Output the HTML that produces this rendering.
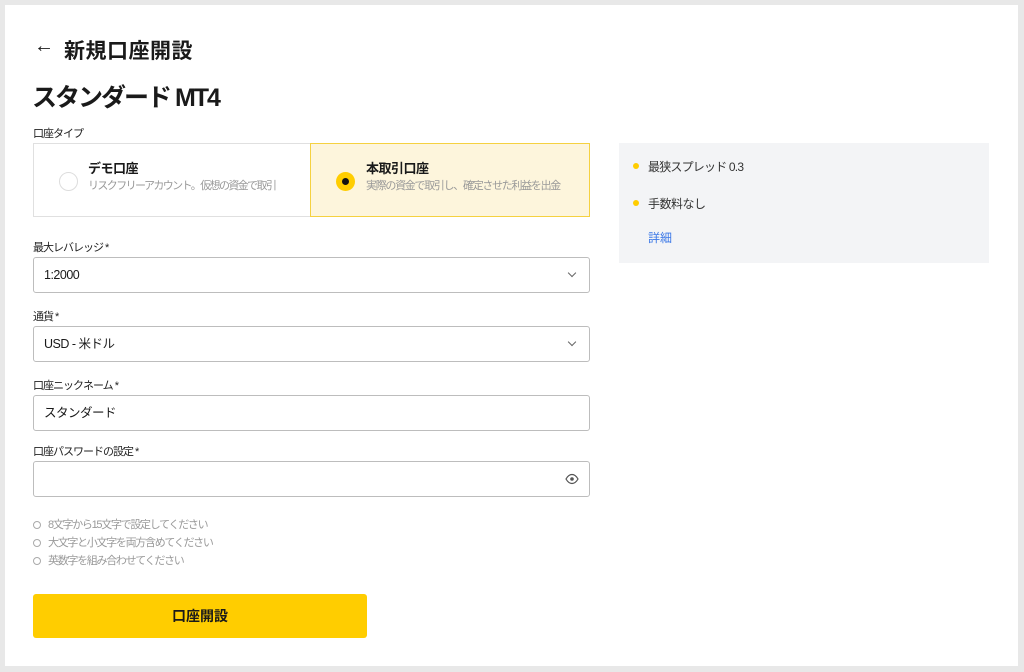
<!DOCTYPE html>
<html><head><meta charset="utf-8"><style>
*{box-sizing:border-box;margin:0;padding:0}
body{width:1024px;height:672px;background:#e8e8e8;font-family:"Liberation Sans","Noto Sans CJK JP",sans-serif;color:#1a1a1a;position:relative;overflow:hidden}
.panel{position:absolute;left:5px;top:5px;width:1013px;height:661px;background:#fff}
.a{position:absolute;white-space:nowrap}
.lbl{font-size:11px;color:#222;letter-spacing:-1px}
.box{position:absolute;left:33px;width:557px;height:36px;border:1px solid #bdbdbd;border-radius:3px;font-size:12.5px;padding:0 10px;line-height:34px;letter-spacing:-0.5px}
.chev{position:absolute;right:14px;top:12px;width:6px;height:6px;border-right:1.2px solid #666;border-bottom:1.2px solid #666;transform:rotate(45deg)}
.rule{font-size:11px;color:#9a9a9a;letter-spacing:-1.3px}
.rule i{display:inline-block;width:8px;height:8px;border:1px solid #aaa;border-radius:50%;margin-right:7px;vertical-align:-1px}
</style></head><body>
<div class="panel"></div>
<div class="a" style="left:34px;top:35px;font-size:20px">←</div>
<div class="a" style="left:64px;top:35px;font-size:21px;font-weight:bold;letter-spacing:0.5px">新規口座開設</div>
<div class="a" style="left:32px;top:78px;font-size:25px;font-weight:bold;letter-spacing:-2px">スタンダード MT4</div>
<div class="a lbl" style="left:33px;top:125px">口座タイプ</div>
<div class="a" style="left:33px;top:143px;width:278px;height:74px;border:1px solid #e0e0e0"></div>
<div class="a" style="left:310px;top:143px;width:280px;height:74px;border:1px solid #f5d140;background:#fdf5dc"></div>
<div class="a" style="left:59px;top:172px;width:19px;height:19px;border:1px solid #ddd;border-radius:50%"></div>
<div class="a" style="left:88px;top:158px;font-size:13px;font-weight:bold;letter-spacing:-0.5px">デモ口座</div>
<div class="a" style="left:88px;top:177px;font-size:11px;color:#999;letter-spacing:-1.6px">リスクフリーアカウント。仮想の資金で取引</div>
<div class="a" style="left:336px;top:172px;width:19px;height:19px;background:#ffcd00;border-radius:50%"></div>
<div class="a" style="left:342px;top:178px;width:7px;height:7px;background:#111;border-radius:50%"></div>
<div class="a" style="left:366px;top:158px;font-size:13px;font-weight:bold;letter-spacing:-0.5px">本取引口座</div>
<div class="a" style="left:366px;top:177px;font-size:11px;color:#999;letter-spacing:-1.3px">実際の資金で取引し、確定させた利益を出金</div>
<div class="a" style="left:619px;top:143px;width:370px;height:120px;background:#f3f4f6"></div>
<div class="a" style="left:633px;top:163px;width:6px;height:6px;border-radius:50%;background:#ffcd00"></div>
<div class="a" style="left:648px;top:158px;font-size:12px;color:#333;letter-spacing:-0.8px">最狭スプレッド 0.3</div>
<div class="a" style="left:633px;top:200px;width:6px;height:6px;border-radius:50%;background:#ffcd00"></div>
<div class="a" style="left:648px;top:195px;font-size:12px;color:#333;letter-spacing:-0.5px">手数料なし</div>
<div class="a" style="left:648px;top:229px;font-size:12px;color:#3b78e7">詳細</div>
<div class="a lbl" style="left:33px;top:239px">最大レバレッジ *</div>
<div class="box" style="top:257px">1:2000<span class="chev"></span></div>
<div class="a lbl" style="left:33px;top:308px">通貨 *</div>
<div class="box" style="top:326px">USD - 米ドル<span class="chev"></span></div>
<div class="a lbl" style="left:33px;top:377px">口座ニックネーム *</div>
<div class="box" style="top:395px">スタンダード</div>
<div class="a lbl" style="left:33px;top:443px">口座パスワードの設定 *</div>
<div class="box" style="top:461px"><svg style="position:absolute;right:10px;top:11px" width="14" height="12" viewBox="0 0 14 12"><path d="M1 6C3 2.5 5 1.5 7 1.5S11 2.5 13 6C11 9.5 9 10.5 7 10.5S3 9.5 1 6Z" fill="none" stroke="#555" stroke-width="1.2"/><circle cx="7" cy="6" r="1.8" fill="#555"/></svg></div>
<div class="a rule" style="left:33px;top:516px"><i></i>8文字から15文字で設定してください</div>
<div class="a rule" style="left:33px;top:534px"><i></i>大文字と小文字を両方含めてください</div>
<div class="a rule" style="left:33px;top:552px"><i></i>英数字を組み合わせてください</div>
<div class="a" style="left:33px;top:594px;width:334px;height:44px;background:#ffcd00;border-radius:3px;text-align:center;line-height:44px;font-size:14px;font-weight:bold">口座開設</div>
</body></html>
